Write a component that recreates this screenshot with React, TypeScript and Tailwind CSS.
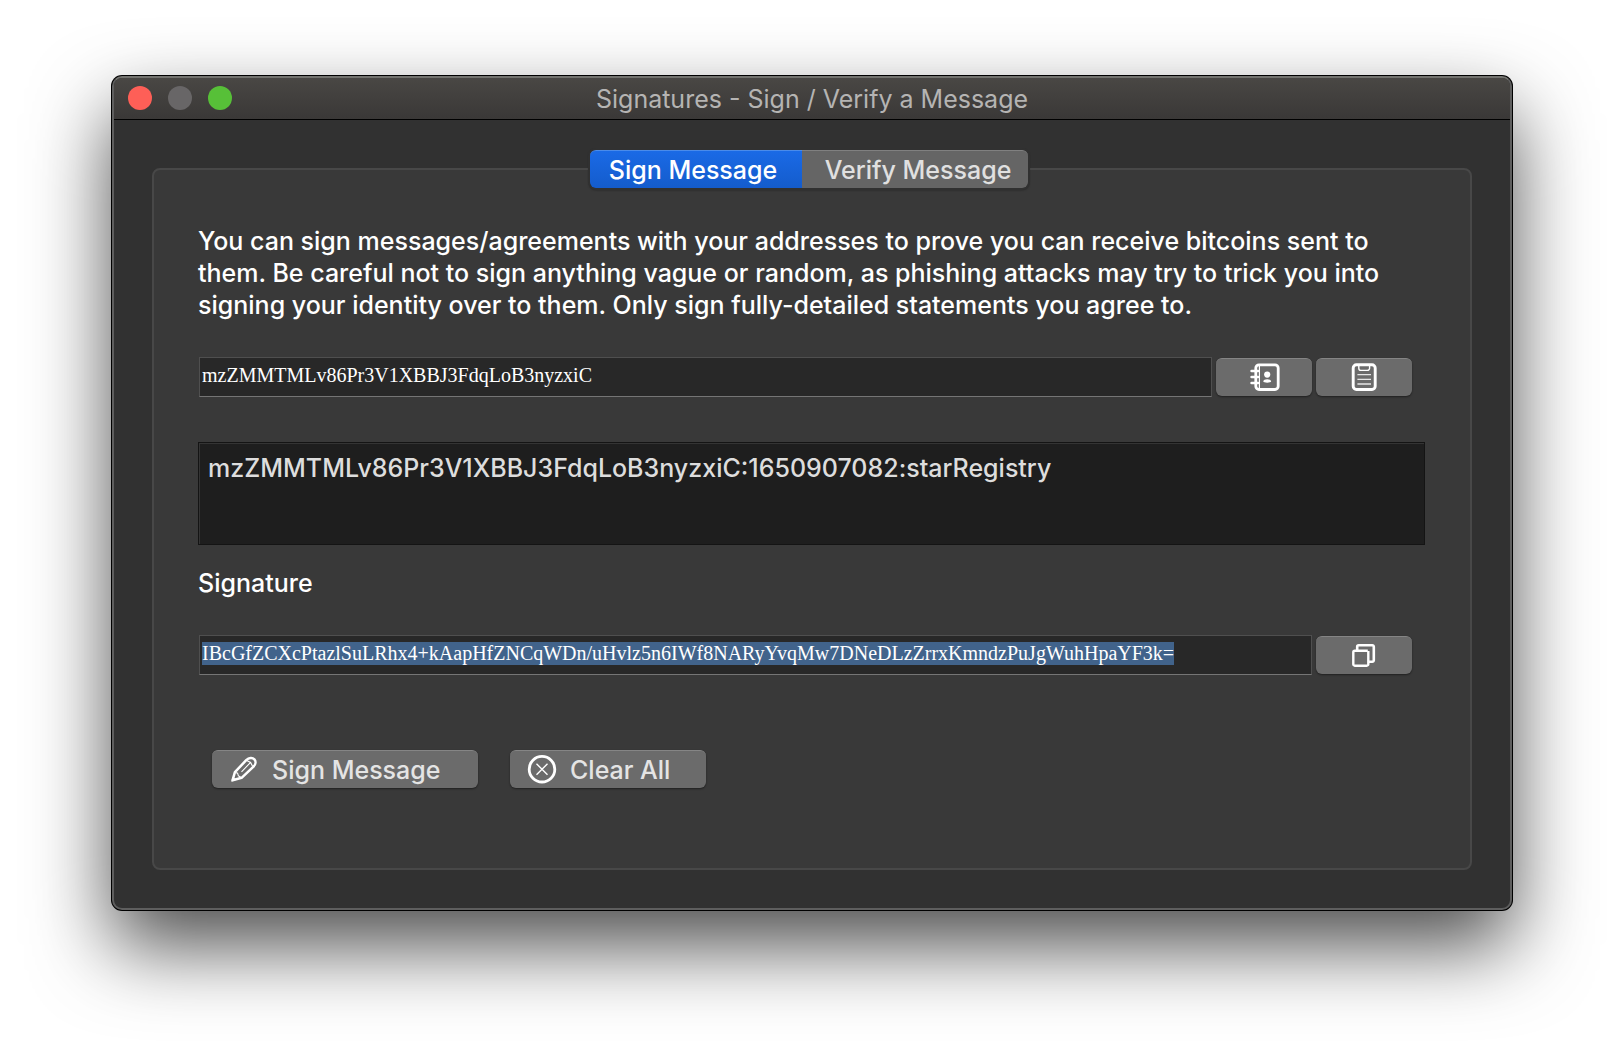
import { useEffect, useRef, useState, type ReactNode } from "react";

const BUTTON =
  "flex h-[38px] items-center rounded-md border-t border-[#858585] bg-[#6b6b6b] text-[#e4e4e4] shadow-[0_1px_2px_rgba(0,0,0,0.45)]";
const FIELD =
  "h-10 min-w-0 flex-1 rounded-none border border-[#4f4f4f] border-b-[#757575] bg-[#282828] pb-1 pl-0.5 font-['Liberation_Serif',serif] text-xl font-normal leading-5 text-white outline-none selection:bg-[#41638b] selection:text-white";

function Icon({ children }: { children: ReactNode }) {
  return (
    <svg viewBox="0 0 32 32" className="h-8 w-8 shrink-0" fill="none" stroke="#fff" aria-hidden="true">
      {children}
    </svg>
  );
}

function AddressBookIcon() {
  return (
    <Icon>
      <rect x="7.8" y="2.8" width="22.4" height="24.7" rx="3.2" strokeWidth="2.8" />
      <path d="M11.4 3v24" strokeWidth="1.2" />
      <path d="M3.6 9H10M3.6 15H10M3.6 21H10" strokeWidth="2.6" strokeLinecap="round" />
      <circle cx="19.2" cy="12.6" r="3.1" fill="#fff" stroke="none" />
      <path d="M15.3 19.6c0-3 7.8-3 7.8 0 0 1.4-7.8 1.4-7.8 0z" fill="#fff" stroke="none" />
    </Icon>
  );
}

function PasteIcon() {
  return (
    <Icon>
      <rect x="5.2" y="2.8" width="22" height="24.7" rx="3.2" strokeWidth="2.9" />
      <path d="M10.8 4v2.2a2.2 2.2 0 0 0 2.2 2.2h6.4a2.2 2.2 0 0 0 2.2-2.2V4" strokeWidth="1.4" />
      <path d="M9.4 12.6H23M9.4 17.4H23M9.4 22H23" stroke="#e6e6e6" strokeWidth="1.4" />
    </Icon>
  );
}

function CopyIcon() {
  return (
    <Icon>
      <path d="M9.200 10V6.800A1.500 1.500 0 0 1 10.700 5.300H24.300A1.500 1.500 0 0 1 25.800 6.800V20.300A1.500 1.500 0 0 1 24.300 21.800H21" strokeWidth="2.600" />
      <path d="M20.300 11V24.200A1.500 1.500 0 0 1 18.800 25.700H6.800A1.500 1.500 0 0 1 5.300 24.200V12.300A1.500 1.500 0 0 1 6.800 10.800H19.800" strokeWidth="2.400" />
    </Icon>
  );
}

function PencilIcon() {
  return (
    <Icon>
      <path
        d="M4.600 26.200L6.900 18.200 18.200 6.200C21 3.500 24.600 3.500 26.400 5.400 28.100 7.300 27.800 10.400 25.500 12.700L13.600 23.800z"
        strokeWidth="2.500"
        strokeLinejoin="round"
      />
      <path d="M6.800 18.200L9.600 19.200 10.400 21.800 13.400 23.600M18.200 6.200L22.600 8.400 24.800 12.800M22.600 8.400L13.500 17.800" strokeWidth="1.100" />
      <path d="M3.200 27.800L4.400 23.600 7.600 26.300z" fill="#fff" stroke="none" />
    </Icon>
  );
}

function ClearIcon() {
  return (
    <Icon>
      <circle cx="16" cy="15.200" r="12.800" strokeWidth="2.800" />
      <path d="M10.500 9.700l11 11M21.500 9.700l-11 11" strokeWidth="1.400" />
    </Icon>
  );
}

export default function App() {
  const [tab, setTab] = useState<"sign" | "verify">("sign");
  const signature = useRef<HTMLInputElement>(null);

  useEffect(() => {
    signature.current?.focus();
    signature.current?.setSelectionRange(0, signature.current.value.length);
  }, []);

  const tabClass = (active: boolean) =>
    active
      ? "bg-linear-to-b from-[#1a6ae6] to-[#145ccc] border-[#4a8bea] text-white"
      : "bg-[#656565] border-[#808080] text-[#e0e0e0]";

  return (
    <div className="min-h-screen overflow-hidden bg-white px-28 pt-19 pb-37 font-[Inter,sans-serif] text-[25px] leading-8 font-medium">
      <div className="rounded-[10px] border-2 border-[#5e5e5e] border-t-[#73736f] bg-[#313131] shadow-[0_0_0_1px_#000,0_36px_80px_rgba(0,0,0,0.7)]">
        <header className="flex h-[42px] items-center rounded-t-lg border-b border-black bg-linear-to-b from-[#494744] to-[#3a3837] px-3.5 pb-px">
          <div className="flex flex-1 gap-4">
            <button aria-label="Close" className="h-6 w-6 rounded-full bg-[#fe5f57]" />
            <button aria-label="Minimize" disabled className="h-6 w-6 rounded-full bg-[#686667]" />
            <button aria-label="Zoom" className="h-6 w-6 rounded-full bg-[#57c038]" />
          </div>
          <h1 className="pt-0.5 font-normal text-[#b5b4b3]">Signatures - Sign / Verify a Message</h1>
          <div className="flex-1" />
        </header>

        <main className="px-[38px] pt-[30px] pb-[38px]">
          <div className="relative z-10 flex justify-center pr-1.5">
            <div role="tablist" className="flex rounded-md shadow-[0_0_0_2px_#313131,0_1px_3px_#000]">
              <button
                role="tab"
                aria-selected={tab === "sign"}
                onClick={() => setTab("sign")}
                className={`h-[38px] w-[212px] rounded-l-md border-t pr-1.5 ${tabClass(tab === "sign")}`}
              >
                Sign Message
              </button>
              <button
                role="tab"
                aria-selected={tab === "verify"}
                onClick={() => setTab("verify")}
                className={`h-[38px] w-[226px] rounded-r-md border-t pl-1.5 ${tabClass(tab === "verify")}`}
              >
                Verify Message
              </button>
            </div>
          </div>

          <section className="-mt-5 rounded-lg border-2 border-[#484848] bg-[#393939] pt-[55px] pr-[45px] pb-20 pl-11 text-white">
            <p>
              You can sign messages/agreements with your addresses to prove you can receive bitcoins sent to
              <br />
              them. Be careful not to sign anything vague or random, as phishing attacks may try to trick you into
              <br />
              signing your identity over to them. Only sign fully-detailed statements you agree to.
            </p>

            <div className="mt-9 mr-[13px] ml-px flex items-center gap-1">
              <input
                type="text"
                aria-label="Address"
                defaultValue="mzZMMTMLv86Pr3V1XBBJ3FdqLoB3nyzxiC"
                className={FIELD}
              />
              <button aria-label="Choose address" className={`${BUTTON} w-24 justify-center`}>
                <AddressBookIcon />
              </button>
              <button aria-label="Paste address" className={`${BUTTON} w-24 justify-center`}>
                <PasteIcon />
              </button>
            </div>

            <textarea
              aria-label="Message"
              defaultValue="mzZMMTMLv86Pr3V1XBBJ3FdqLoB3nyzxiC:1650907082:starRegistry"
              className="mt-[45px] block h-[103px] w-full resize-none border border-[#141414] bg-[#1e1e1e] px-[9px] py-[9px] text-[#dddddd] shadow-[inset_1px_1px_0_#343434] outline-none"
            />

            <label htmlFor="signature" className="mt-[22px] block">
              Signature
            </label>
            <div className="mt-9 mr-[13px] ml-px flex items-center gap-1">
              <input
                id="signature"
                ref={signature}
                type="text"
                readOnly
                defaultValue="IBcGfZCXcPtazlSuLRhx4+kAapHfZNCqWDn/uHvlz5n6IWf8NARyYvqMw7DNeDLzZrrxKmndzPuJgWuhHpaYF3k="
                className={FIELD}
              />
              <button aria-label="Copy signature" className={`${BUTTON} w-24 justify-center`}>
                <CopyIcon />
              </button>
            </div>

            <div className="mt-[75px] ml-3.5 flex gap-8">
              <button className={`${BUTTON} w-[266px] gap-3 pl-4`}>
                <PencilIcon />
                Sign Message
              </button>
              <button className={`${BUTTON} w-[196px] gap-3 pl-4`}>
                <ClearIcon />
                Clear All
              </button>
            </div>
          </section>
        </main>
      </div>
    </div>
  );
}
